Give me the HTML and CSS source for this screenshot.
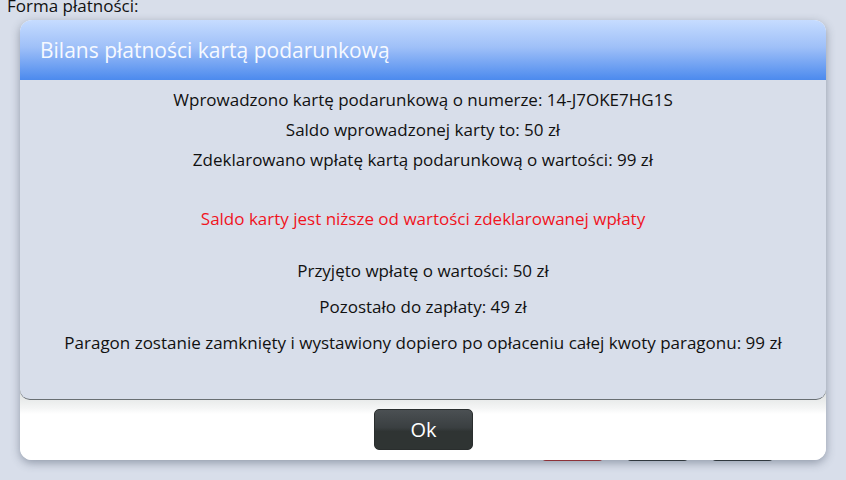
FILE: index.html
```html
<!DOCTYPE html>
<html lang="pl">
<head>
<meta charset="utf-8">
<link rel="stylesheet" href="styles.css">
</head>
<body>
<div class="page">
  <div class="page-label">Forma płatności:</div>
  <div class="page-actions">
    <span class="bg-btn bg-btn-red"></span>
    <span class="bg-btn"></span>
    <span class="bg-btn"></span>
  </div>
</div>
<div class="dialog">
  <div class="dialog-header">Bilans płatności kartą podarunkową</div>
  <div class="dialog-body">
    <div class="line first">Wprowadzono kartę podarunkową o numerze: 14-J7OKE7HG1S</div>
    <div class="line">Saldo wprowadzonej karty to: 50 zł</div>
    <div class="line">Zdeklarowano wpłatę kartą podarunkową o wartości: 99 zł</div>
    <div class="line warn">Saldo karty jest niższe od wartości zdeklarowanej wpłaty</div>
    <div class="line group">Przyjęto wpłatę o wartości: 50 zł</div>
    <div class="line spaced">Pozostało do zapłaty: 49 zł</div>
    <div class="line spaced">Paragon zostanie zamknięty i wystawiony dopiero po opłaceniu całej kwoty paragonu: 99 zł</div>
  </div>
  <div class="dialog-footer">
    <button class="ok-btn">Ok</button>
  </div>
</div>
</body>
</html>
```
FILE: styles.css
```css
html, body {
  margin: 0;
  padding: 0;
}
body {
  width: 846px;
  height: 480px;
  overflow: hidden;
  background: #d8deea;
  font-family: "Open Sans", "Noto Sans", sans-serif;
  color: #111;
  position: relative;
}
.page {
  height: 480px;
  display: flex;
  flex-direction: column;
}
.page-label {
  font-size: 17px;
  line-height: 18px;
  margin-top: -3px;
  padding-left: 7px;
  color: #111;
}
.page-actions {
  margin-top: auto;
  margin-bottom: 19px;
  display: flex;
  justify-content: flex-end;
  gap: 24px;
  padding-right: 73px;
}
.bg-btn {
  width: 61px;
  height: 41px;
  border-radius: 4px;
  background: #2e3333;
}
.bg-btn-red {
  background: #b3292b;
}
.dialog {
  position: absolute;
  left: 20px;
  top: 20px;
  width: 806px;
  height: 440px;
  border-radius: 12px;
  background: #fff;
  box-shadow: 0 3px 10px rgba(60, 70, 90, 0.45);
  display: flex;
  flex-direction: column;
  overflow: hidden;
}
.dialog-header {
  height: 60px;
  flex: none;
  background: linear-gradient(to bottom, #c6dcff 0%, #9fc0f8 45%, #4c8aee 100%);
  color: #f6f9ff;
  font-size: 21px;
  line-height: 60px;
  padding-left: 20px;
  box-sizing: border-box;
}
.dialog-body {
  height: 320px;
  flex: none;
  box-sizing: border-box;
  background: #d8deea;
  border-bottom: 1px solid #686e72;
  border-radius: 0 0 10px 10px;
  padding-top: 5px;
  text-align: center;
  font-size: 17px;
  position: relative;
  z-index: 1;
}
.line {
  line-height: 30px;
  color: #111;
}
.line.warn {
  color: #f0141e;
  margin-top: 29px;
}
.line.group {
  margin-top: 22px;
}
.line.spaced {
  margin-top: 6px;
}
.dialog-footer {
  flex: 1;
  background: linear-gradient(to bottom, #dcdfde 0px, #f4f5f5 18px, #ffffff 24px);
  display: flex;
  justify-content: center;
  align-items: flex-start;
  padding-top: 9px;
  margin-top: -10px;
  position: relative;
  z-index: 0;
}
.ok-btn {
  margin-top: 10px;
  width: 99px;
  height: 41px;
  border: 1px solid #2a2e2e;
  border-radius: 5px;
  background: linear-gradient(to bottom, #4b5053 0%, #3a3f41 45%, #2f3433 55%, #2f3433 100%);
  color: #fff;
  font-family: "Open Sans", "Noto Sans", sans-serif;
  font-size: 20px;
  padding: 0;
  cursor: pointer;
  margin-left: 1px;
}
```
